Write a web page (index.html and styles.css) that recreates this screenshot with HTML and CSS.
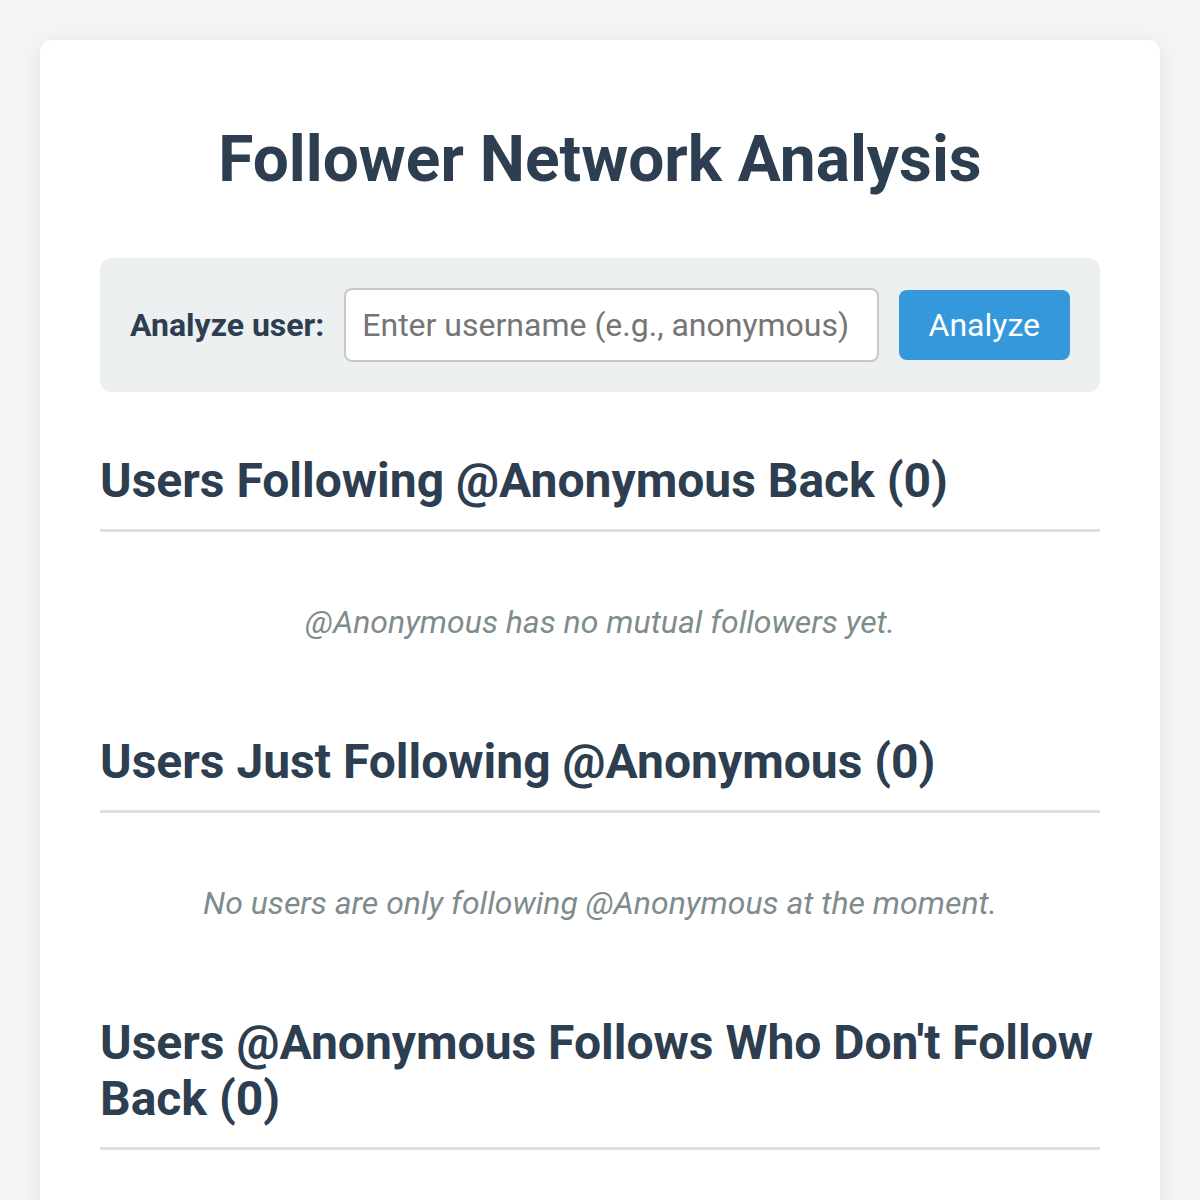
FILE: index.html
```html
<!DOCTYPE html>
<html lang="en">
<head>
    <meta charset="UTF-8">
    <title>Follower Network Analysis</title>
    <link rel="stylesheet" href="styles.css">
</head>
<body>

<div class="container">
    <h1>Follower Network Analysis</h1>

    <form class="search-box" onsubmit="return false;">
        <label for="username">Analyze user:</label>
        <input type="text" id="username" placeholder="Enter username (e.g., anonymous)">
        <button type="submit">Analyze</button>
    </form>

    <div class="section">
        <h2>Users Following @Anonymous Back (0)</h2>
        <p class="empty">@Anonymous has no mutual followers yet.</p>
    </div>

    <div class="section">
        <h2>Users Just Following @Anonymous (0)</h2>
        <p class="empty">No users are only following @Anonymous at the moment.</p>
    </div>

    <div class="section">
        <h2>Users @Anonymous Follows Who Don't Follow Back (0)</h2>
        <p class="empty">@Anonymous follows everyone who follows them back.</p>
    </div>
</div>

</body>
</html>
```

FILE: styles.css
```css
body {
    font-family: Roboto, 'Noto Sans', sans-serif;
    margin: 0;
    padding: 40px;
    background: #f3f5f5;
    color: #2c3e50;
}

.container {
    background: #fff;
    border-radius: 12px;
    box-shadow: 0 4px 20px rgba(0, 0, 0, 0.07);
    padding: 60px;
}

h1 {
    text-align: center;
    font-size: 64px;
    font-weight: 700;
    line-height: 75px;
    margin: 22px 0 61px;
}

.search-box {
    display: flex;
    align-items: center;
    gap: 20px;
    background: #ecf0f1;
    border-radius: 12px;
    padding: 30px;
}

.search-box label {
    font-size: 32px;
    font-weight: 700;
}

.search-box input {
    flex: 1;
    min-width: 0;
    font-family: inherit;
    font-size: 32px;
    padding: 16px;
    border: 2px solid #c8c8c8;
    border-radius: 8px;
    color: #333;
}

.search-box input::placeholder {
    color: #757575;
}

.search-box button {
    font-family: inherit;
    font-size: 32px;
    padding: 16px 30px;
    border: none;
    border-radius: 8px;
    background: #3498db;
    color: #fff;
    cursor: pointer;
}

.section {
    margin-top: 61px;
}

h2 {
    font-size: 48px;
    font-weight: 700;
    line-height: 56px;
    margin: 0;
    padding-bottom: 20px;
    border-bottom: 3px solid #e0e0e0;
}

.empty {
    text-align: center;
    font-style: italic;
    font-size: 32px;
    line-height: 37px;
    color: #7f8c8d;
    margin: 0;
    padding: 72px 0 32px;
}
```
